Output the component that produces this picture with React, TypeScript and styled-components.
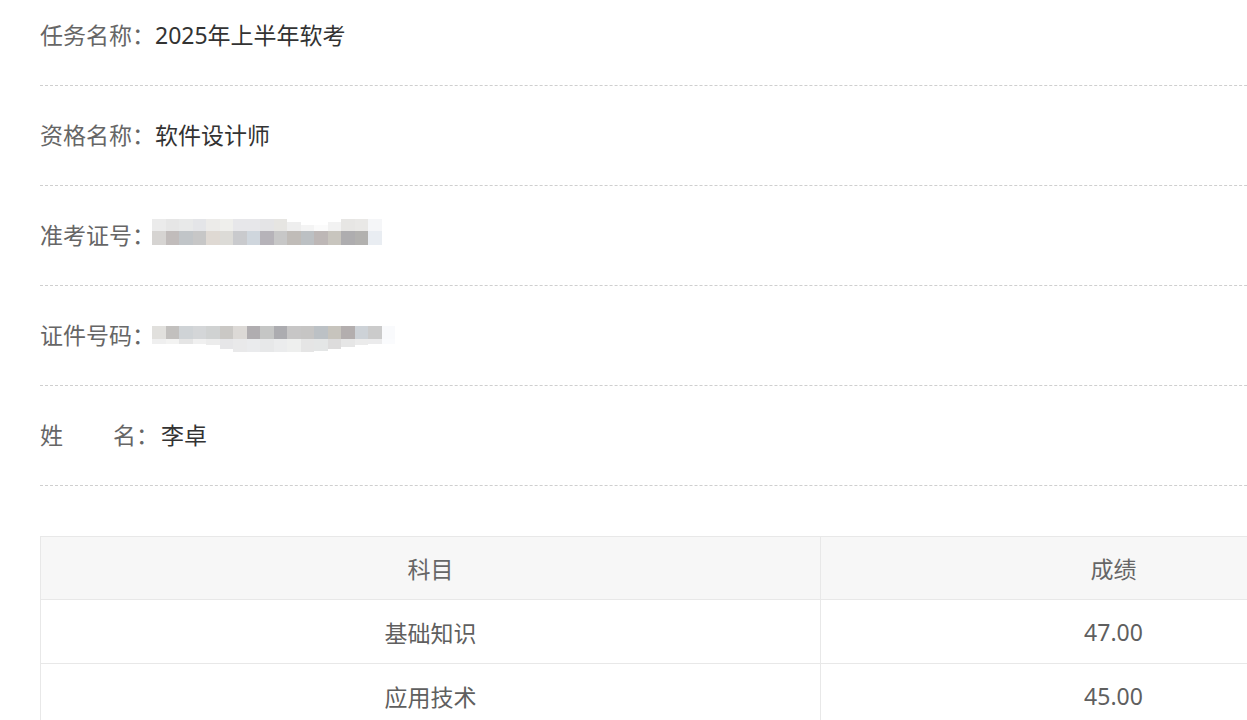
import styled, { createGlobalStyle } from "styled-components"

const GlobalStyle = createGlobalStyle`
  html, body {
    margin: 0;
    padding: 0;
    background: #fff;
    overflow: hidden;
  }
  body {
    font-family: "Noto Sans", "Noto Sans CJK SC", sans-serif;
  }
`

const Page = styled.div`
  width: 1367px;
  padding-left: 40px;
  margin-top: -14px;
`

const InfoList = styled.div``

const InfoRow = styled.div`
  height: 99px;
  line-height: 99px;
  border-bottom: 1px dashed #cfcfcf;
  font-size: 23px;
  white-space: nowrap;
`

const Label = styled.span`
  color: #666;
`

const Gap = styled.span`
  display: inline-block;
  width: 50px;
`

const Value = styled.span<{ $pad?: number }>`
  color: #333;
  padding-left: ${p => p.$pad ?? 0}px;
`

const Mosaic = styled.span<{ $va: number }>`
  display: inline-flex;
  flex-direction: column;
  vertical-align: ${p => p.$va}px;
  margin-left: -3px;
  line-height: 0;
`

const MosaicRow = styled.span<{ $h: number }>`
  display: flex;
  align-items: flex-start;
  height: ${p => p.$h}px;
`

const Cell = styled.span<{ $c: string; $h?: number; $top?: number }>`
  display: block;
  width: 13.5px;
  height: ${p => (p.$h !== undefined ? `${p.$h}px` : "100%")};
  margin-top: ${p => p.$top ?? 0}px;
  background: ${p => p.$c};
`

const ScoreTable = styled.table`
  margin-top: 50px;
  width: 1367px;
  border-collapse: collapse;
  font-size: 23px;
  color: #666;
  table-layout: fixed;
`

const HeadCell = styled.th<{ $w?: number }>`
  height: 62px;
  padding: 0;
  background: #f7f7f7;
  border: 1px solid #e8e8e8;
  font-weight: normal;
  text-align: center;
  width: ${p => (p.$w ? `${p.$w}px` : "auto")};
`

const BodyCell = styled.td`
  height: 63px;
  padding: 0;
  border: 1px solid #e8e8e8;
  text-align: center;
  color: #5f5f5f;
`

type MCell = { c: string; h?: number; top?: number }

const ticketTop: MCell[] = [
  "#ebebeb", "#e6e6e6", "#e8e9e9", "#e4e5e8", "#ecebe9", "#efefec", "#e7e7ea", "#e7e7ea",
  "#e4e4e6", "#e6e5e2", "#eeeeee", "#f4f4f4", "#fbfbfb", "#f2f2f2", "#e7e6e4", "#e9e8e6", "#f5f6f8",
].map((c, i) => ({ c, h: i === 11 || i === 12 ? 6 : i === 10 || i === 13 ? 9 : undefined, top: i === 11 || i === 12 ? 6 : i === 10 || i === 13 ? 3 : 0 }))

const ticketBottom: MCell[] = [
  "#d6d4d2", "#c1bcbb", "#c1c5c8", "#c7c7c7", "#dfd9d3", "#dcdbd7", "#c9cacd", "#cfd6dd",
  "#b6b3b9", "#c7c7c7", "#c0bcb8", "#bcc0c3", "#bdb7b6", "#c8c5be", "#aeadaf", "#b2b1af", "#e9edf2",
].map(c => ({ c }))

const idTop: MCell[] = [
  "#e1e0dd", "#c2c0be", "#cfd3d6", "#d4d6d8", "#d0d2d2", "#cac8c5", "#dcd9d6", "#b0adb0", "#c5c6c5",
  "#acacb0", "#c7c6c6", "#c6c5c4", "#bcc1c5", "#c7c4bd", "#b3aeae", "#cdd2d7", "#cbcbcb", "#f9fafc",
].map(c => ({ c }))

const idBottomHeights = [5, 5, 5, 5, 6, 10, 13, 13, 13, 13, 13, 13, 12, 10, 8, 6, 5, 5]
const idBottom: MCell[] = [
  "#efefef", "#f3f3f2", "#e5e5e5", "#f0f0f0", "#ececec", "#e6e6e8", "#e9e9ea", "#eaebed", "#e7e8e9",
  "#ebeced", "#eeefee", "#e5e5e5", "#e4e6e6", "#dddcdc", "#e6e6e6", "#ebebeb", "#ebebec", "#fafbfd",
].map((c, i) => ({ c, h: idBottomHeights[i] }))

const Blur = ({ rows, va }: { rows: { h: number; cells: MCell[] }[]; va: number }) => (
  <Mosaic $va={va}>
    {rows.map((r, i) => (
      <MosaicRow key={i} $h={r.h}>
        {r.cells.map((cell, j) => (
          <Cell key={j} $c={cell.c} $h={cell.h} $top={cell.top} />
        ))}
      </MosaicRow>
    ))}
  </Mosaic>
)

const App = () => {
  return (
    <Page>
      <GlobalStyle />

      <InfoList>
        <InfoRow>
          <Label>任务名称：</Label>
          <Value>2025年上半年软考</Value>
        </InfoRow>

        <InfoRow>
          <Label>资格名称：</Label>
          <Value>软件设计师</Value>
        </InfoRow>

        <InfoRow>
          <Label>准考证号：</Label>
          <Blur va={13} rows={[{ h: 12, cells: ticketTop }, { h: 14, cells: ticketBottom }]} />
        </InfoRow>

        <InfoRow>
          <Label>证件号码：</Label>
          <Blur va={5} rows={[{ h: 13, cells: idTop }, { h: 13, cells: idBottom }]} />
        </InfoRow>

        <InfoRow>
          <Label>姓<Gap />名：</Label>
          <Value $pad={2}>李卓</Value>
        </InfoRow>
      </InfoList>

      <ScoreTable>
        <thead>
          <tr>
            <HeadCell $w={779}>科目</HeadCell>
            <HeadCell>成绩</HeadCell>
          </tr>
        </thead>
        <tbody>
          <tr>
            <BodyCell>基础知识</BodyCell>
            <BodyCell>47.00</BodyCell>
          </tr>
          <tr>
            <BodyCell>应用技术</BodyCell>
            <BodyCell>45.00</BodyCell>
          </tr>
        </tbody>
      </ScoreTable>
    </Page>
  )
}

export default App
